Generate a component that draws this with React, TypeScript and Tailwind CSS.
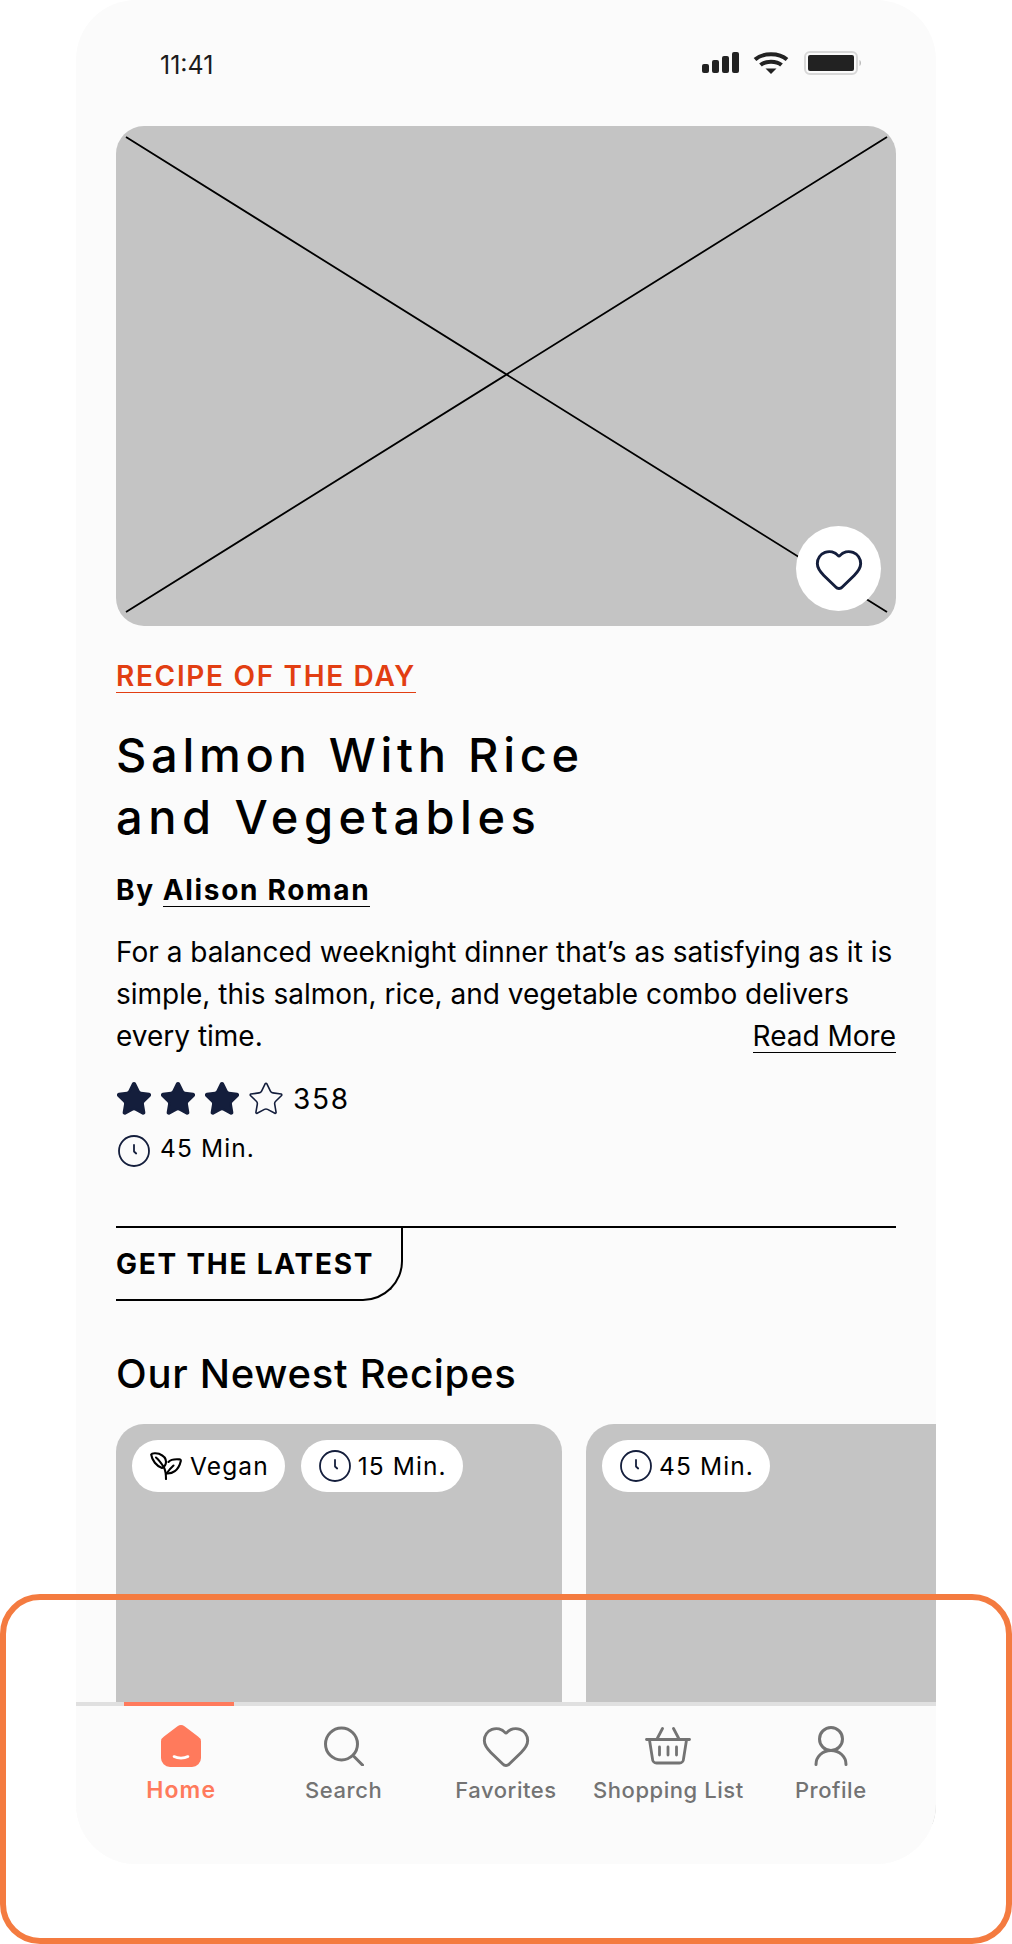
import { Heart, Star } from "lucide-react";

const NAVY = "#141e3c";
const GREY = "#737373";

function Clock({ className }: { className?: string }) {
  return (
    <svg viewBox="0 0 32 32" className={className} fill="none" stroke={NAVY} strokeWidth="1.8" strokeLinecap="round" strokeLinejoin="round">
      <circle cx="16" cy="16" r="15" />
      <path d="M16 10v6.5l2.2 2" />
    </svg>
  );
}

function Sprout({ className }: { className?: string }) {
  return (
    <svg viewBox="0 0 32 28" className={className} fill="none" stroke="#000" strokeWidth="2.100" strokeLinecap="round" strokeLinejoin="round">
      <path d="M16 27c0-5.500-.5-8.500-2-11.500" />
      <path d="M12 16C6.500 14 2 8.500 1.200 2.500 2 .8 7 1 9 1.800c4.500 1.800 7 4.500 7 8 0 2.500-1.500 5-4 6.200Z" />
      <path d="M6 5.500c3 2.500 5.500 6 8 10" />
      <path d="M16.500 21.500c5.500.5 12-2.500 14.300-12.500.2-1-.5-1.500-1.500-1.600-4-.3-8.500 0-10.800 2.600" />
      <path d="M23.500 13.500c-2 1.800-4.500 4.500-7 8" />
    </svg>
  );
}

function HomeIcon() {
  return (
    <svg viewBox="0 0 40 42" className="w-[40px] h-[42px]">
      <path d="M16.500 1.300a6 6 0 0 1 7 0L37 11.500a6 6 0 0 1 3 5V33a9 9 0 0 1-9 9H9a9 9 0 0 1-9-9V16.500a6 6 0 0 1 3-5Z" fill="#ff7a5c" />
      <path d="M13 31.500c4 2.200 10 2.200 14 0" fill="none" stroke="#fff" strokeWidth="2.600" strokeLinecap="round" />
    </svg>
  );
}

function SearchIcon() {
  return (
    <svg viewBox="0 0 40 40" className="w-[40px] h-[40px]" fill="none" stroke={GREY} strokeWidth="3" strokeLinecap="round">
      <circle cx="17.500" cy="18" r="16" />
      <path d="M30 30.500 38.500 39" />
    </svg>
  );
}

function BasketIcon() {
  return (
    <svg viewBox="0 0 46 38" className="w-[46px] h-[38px]" fill="none" stroke={GREY} strokeWidth="2.800" strokeLinecap="round" strokeLinejoin="round">
      <path d="M1.500 12.500h43" />
      <path d="M4.500 13l3 19a4 4 0 0 0 4 4h23a4 4 0 0 0 4-4l3-19" />
      <path d="M17.500 1.500 12 12M28.500 1.500 34 12" />
      <path d="M14.500 20v8M23 20v8M31.500 20v8" />
    </svg>
  );
}

function ProfileIcon() {
  return (
    <svg viewBox="0 0 34 40" className="w-[34px] h-[40px]" fill="none" stroke={GREY} strokeWidth="3" strokeLinecap="round">
      <circle cx="17" cy="13" r="11.500" />
      <path d="M2 38.500C2 30.500 8.500 24.500 17 24.500S32 30.500 32 38.500" />
    </svg>
  );
}

function Chip({ icon, label }: { icon: React.ReactNode; label: string }) {
  return (
    <div className="flex h-[52px] items-center gap-[7px] rounded-full bg-white pl-[18px] pr-[16px]">
      {icon}
      <span className="text-[24.500px] tracking-[0.045em] text-black">{label}</span>
    </div>
  );
}

const tabs = [
  { label: "Home", icon: <HomeIcon />, active: true },
  { label: "Search", icon: <SearchIcon /> },
  { label: "Favorites", icon: <Heart size={52} color={GREY} strokeWidth={1.35} /> },
  { label: "Shopping List", icon: <BasketIcon /> },
  { label: "Profile", icon: <ProfileIcon /> },
];

export default function App() {
  return (
    <div className="relative h-[1944px] w-[1012px] overflow-hidden bg-white font-['Inter',sans-serif] text-black">
      <div className="relative ml-[76px] h-[1864px] w-[860px] overflow-hidden rounded-[60px] bg-[#fbfbfb]">
        {/* Status bar */}
        <div className="flex h-[126px] items-start justify-between pl-[84px] pr-[75px] pt-[51px]">
          <span className="-mt-[1px] text-[25px] leading-[30px] font-normal text-[#1c1c1c]">11:41</span>
          <svg viewBox="0 0 160 24" className="h-[24px] w-[160px]">
            <g fill="#222">
              <rect x="1" y="13" width="7" height="9" rx="2" />
              <rect x="11" y="9" width="7" height="13" rx="2" />
              <rect x="21" y="5" width="7" height="17" rx="2" />
              <rect x="31" y="1" width="7" height="21" rx="2" />
            </g>
            <path d="M54 8.500c8-7 24-7 32 0M59.500 14c5-4.500 16-4.500 21 0" fill="none" stroke="#222" strokeWidth="4" />
            <path d="M64.500 17.500h11L70 23Z" fill="#222" />
            <rect x="104" y="1" width="52" height="22" rx="5" fill="none" stroke="#d8d8d8" strokeWidth="2" />
            <rect x="107" y="4" width="46" height="16" rx="2" fill="#222" />
            <path d="M158.500 9c2 1 2 5 0 6Z" fill="#bdbdbd" />
          </svg>
        </div>

        <main className="px-[40px]">
          {/* Hero */}
          <div className="relative h-[500px] w-[780px] rounded-[28px] bg-[#c4c4c4]">
            <svg viewBox="0 0 780 500" className="h-full w-full" fill="none" stroke="#000" strokeWidth="1.800">
              <path d="M10 11 771 486M10 486 771 11" />
            </svg>
            <button className="absolute bottom-[15px] right-[15px] flex h-[85px] w-[85px] items-center justify-center rounded-full bg-white">
              <Heart size={52} color={NAVY} strokeWidth={1.35} />
            </button>
          </div>

          <div className="mt-[34px] flex">
            <span className="border-b-[1.5px] border-[#e23e12] text-[28px] leading-[32px] font-semibold tracking-[0.06em] text-[#e23e12]">RECIPE OF THE DAY</span>
          </div>

          <h1 className="mt-[31px] text-[47px] leading-[62px] font-medium tracking-[0.1em]">
            Salmon With Rice
            <br />
            <span className="tracking-[0.117em]">and Vegetables</span>
          </h1>

          <div className="mt-[26px] flex gap-[8px] text-[28px] leading-[32px] font-bold tracking-[0.06em]">
            <span>By</span>
            <span className="border-b-[1.5px] border-black">Alison Roman</span>
          </div>

          <p className="mt-[24px] text-[28px] leading-[42px]">For a balanced weeknight dinner that’s as satisfying as it is simple, this salmon, rice, and vegetable combo delivers</p>
          <div className="flex justify-between text-[28px] leading-[42px]">
            <span>every time.</span>
            <span className="h-[38px] border-b-[1.5px] border-black">Read More</span>
          </div>

          <div className="mt-[24px] flex h-[36px] items-center">
            <div className="-ml-[1px] flex gap-[6px]">
              {[0, 1, 2].map((i) => (
                <Star key={i} size={38} color={NAVY} fill={NAVY} strokeWidth={1.6} />
              ))}
              <Star size={38} color={NAVY} strokeWidth={1} />
            </div>
            <span className="ml-[8px] text-[28px] tracking-[0.06em]">358</span>
          </div>

          <div className="mt-[18px] flex h-[32px] items-center gap-[10px]">
            <Clock className="ml-[2px] h-[32px] w-[32px]" />
            <span className="-mt-[5px] text-[24.500px] tracking-[0.045em]">45 Min.</span>
          </div>

          {/* Section tab */}
          <div className="mt-[59px] border-t-2 border-black">
            <div className="flex h-[73px] w-[287px] items-center rounded-br-[40px] border-r-2 border-b-2 border-black pt-[1px] text-[28px] font-bold tracking-[0.063em]">GET THE LATEST</div>
          </div>

          <h2 className="mt-[49px] text-[40px] leading-[48px] font-medium tracking-[0.018em]">Our Newest Recipes</h2>

          <div className="mt-[26px] flex gap-[24px]">
            <div className="flex h-[400px] w-[446px] shrink-0 items-start gap-[16px] rounded-[28px] bg-[#c4c4c4] p-[16px]">
              <Chip icon={<Sprout className="mr-[1px] h-[28px] w-[32px]" />} label="Vegan" />
              <Chip icon={<Clock className="h-[32px] w-[32px]" />} label="15 Min." />
            </div>
            <div className="flex h-[400px] w-[446px] shrink-0 items-start gap-[16px] rounded-[28px] bg-[#c4c4c4] p-[16px]">
              <Chip icon={<Clock className="h-[32px] w-[32px]" />} label="45 Min." />
            </div>
          </div>
        </main>

        {/* Tab bar */}
        <nav className="absolute bottom-0 left-0 h-[162px] w-full border-t-4 border-[#e0e0e0] bg-[#fbfbfb]">
          <div className="grid grid-cols-5 px-[24px]">
            {tabs.map((t) => (
              <div key={t.label} className="relative flex flex-col items-center">
                {t.active && <div className="absolute -top-[4px] left-[24px] h-[4px] w-[110px] bg-[#ff7a5c]" />}
                <div className="mt-[19px] flex h-[42px] items-center justify-center">{t.icon}</div>
                <span className={`mt-[8px] whitespace-nowrap leading-[30px] ${t.active ? "text-[23px] font-semibold tracking-[0.05em] text-[#ff7a5c]" : "text-[22px] font-medium tracking-[0.025em] text-[#737373]"}`}>{t.label}</span>
              </div>
            ))}
          </div>
        </nav>
      </div>

      {/* Annotation frame */}
      <div className="pointer-events-none absolute bottom-0 left-0 h-[350px] w-[1012px] rounded-[40px] border-[6px] border-[#f47b40]" />
    </div>
  );
}
